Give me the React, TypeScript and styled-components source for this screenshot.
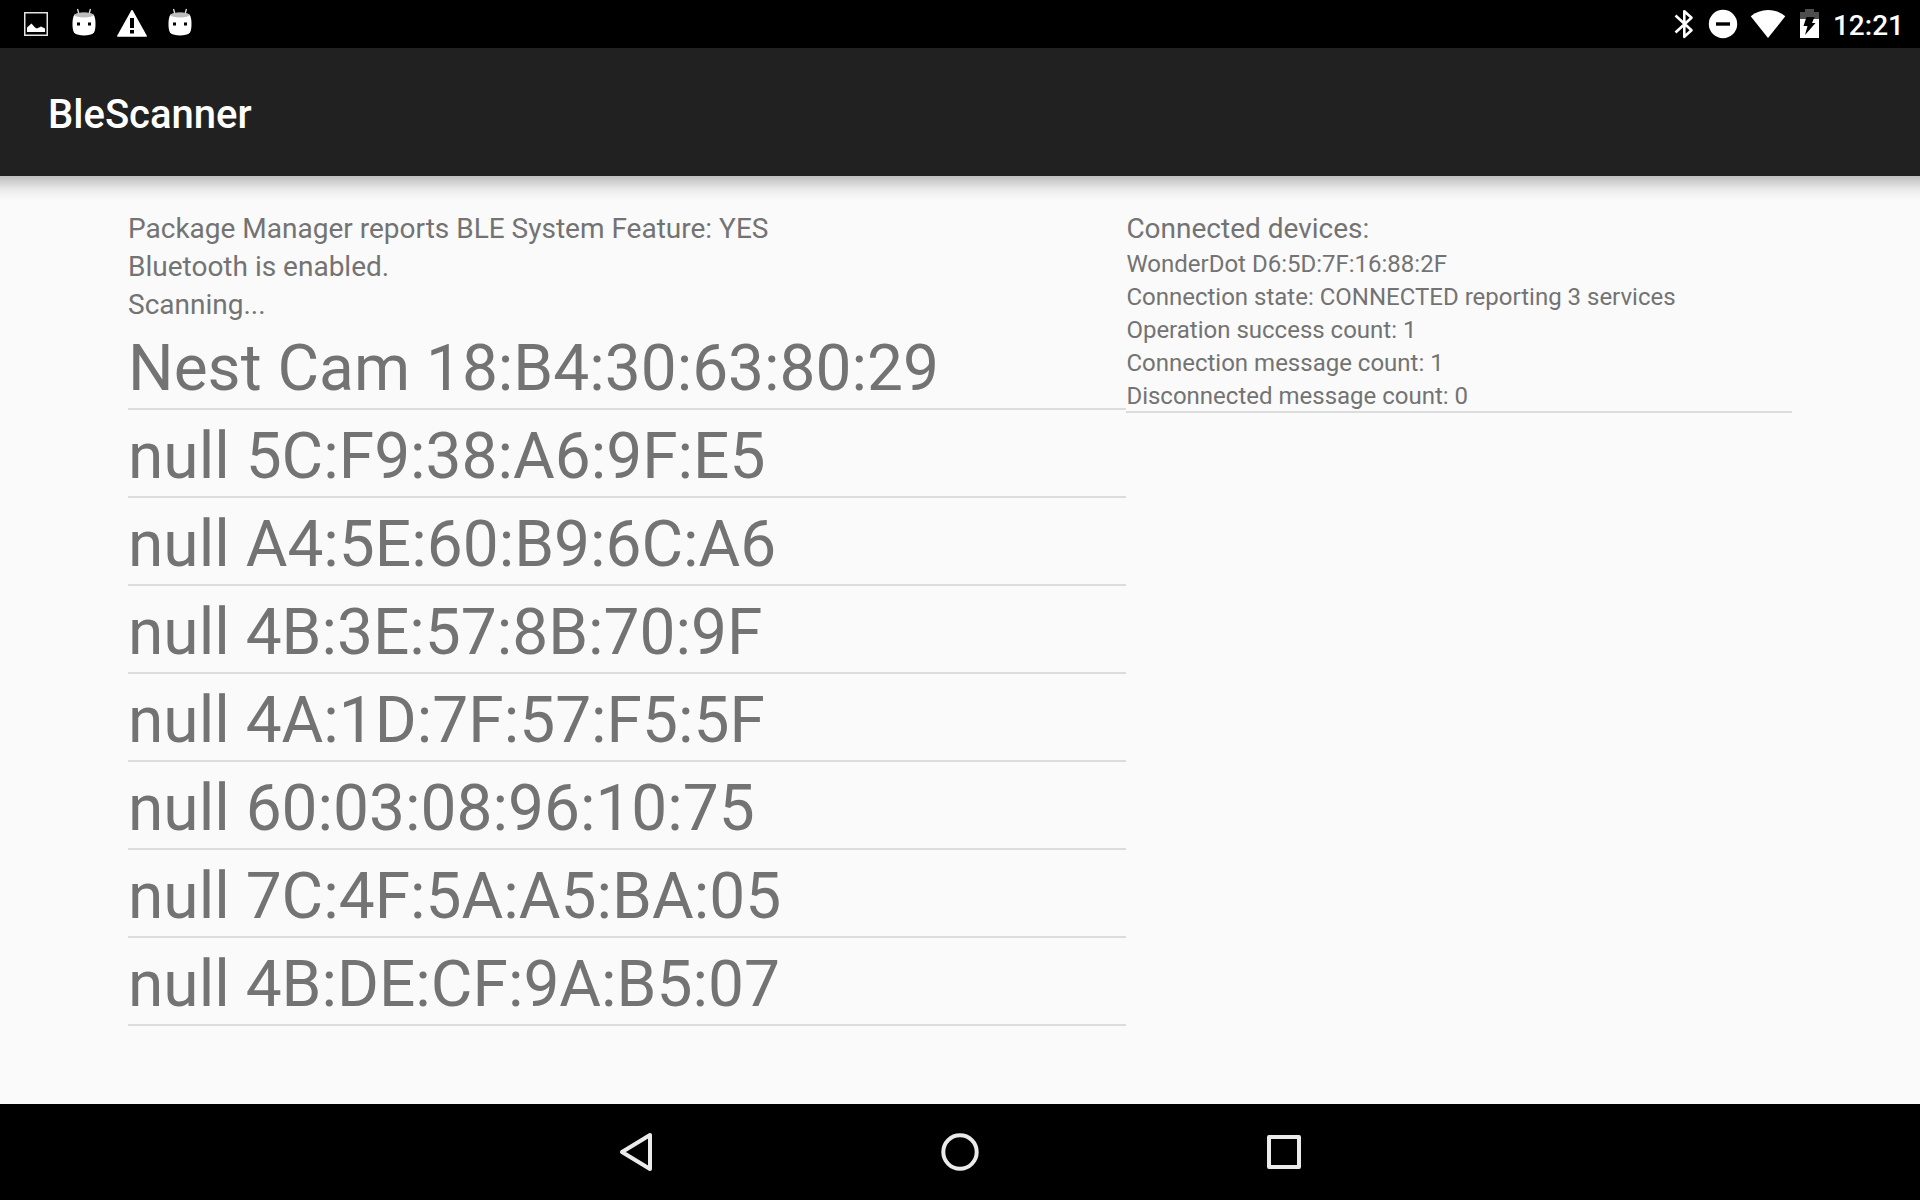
import React from "react";
import styled, { createGlobalStyle } from "styled-components";

const GlobalStyle = createGlobalStyle`
  *, *::before, *::after { box-sizing: border-box; }
  body {
    margin: 0;
    background: #fafafa;
    color: #737373;
    font-family: Roboto, "Noto Sans", sans-serif;
  }
`;

const Screen = styled.div`
  display: flex;
  flex-direction: column;
  min-height: 100vh;
`;

const StatusBar = styled.div`
  display: flex;
  justify-content: space-between;
  height: 48px;
  padding: 0 16px 0 12px;
  background: #000;
  color: #fff;
`;

const Notifications = styled.div`
  display: flex;
  align-items: center;
`;

const SystemStatus = styled.div`
  display: flex;
  align-items: center;
`;

const StatusIcon = styled.svg<{ $width: number }>`
  display: block;
  width: ${(p) => p.$width}px;
  height: 48px;
`;

const Clock = styled.time`
  padding: 4px 0 0 4px;
  font-size: 28px;
  font-weight: 500;
  line-height: 36px;
`;

const AppBar = styled.header`
  position: relative;
  display: flex;
  align-items: center;
  height: 128px;
  padding: 0 48px;
  background: #212121;

  &::after {
    content: "";
    position: absolute;
    top: 100%;
    left: 0;
    right: 0;
    height: 24px;
    background: linear-gradient(
      rgba(0, 0, 0, 0.24),
      rgba(0, 0, 0, 0.18) 20%,
      rgba(0, 0, 0, 0.06) 58%,
      rgba(0, 0, 0, 0)
    );
  }
`;

const Title = styled.h1`
  margin: 0;
  padding-top: 5px;
  color: #fff;
  font-size: 40px;
  font-weight: 500;
  line-height: 48px;
`;

const Content = styled.main`
  flex: 1;
  display: grid;
  grid-template-columns: 3fr 2fr;
  align-items: start;
  padding: 32px 128px;
`;

const Column = styled.section`
  min-width: 0;
`;

const Message = styled.p`
  margin: 0;
  padding-top: 4px;
  font-size: 28px;
  line-height: 34px;
`;

const Heading = styled(Message).attrs({ as: "h2" })`
  font-weight: 400;
`;

const List = styled.ul`
  margin: 0;
  padding: 0;
  list-style: none;
`;

const ScanRow = styled.li`
  padding-top: 8px;
  border-bottom: 2px solid #dcdcdc;
  font-size: 64px;
  line-height: 78px;
`;

const DeviceRow = styled.li`
  border-bottom: 2px solid #dcdcdc;
`;

const DeviceLine = styled.p`
  margin: 0;
  padding-top: 4px;
  font-size: 24px;
  line-height: 29px;
`;

const NavBar = styled.nav`
  display: flex;
  justify-content: center;
  height: 96px;
  background: #000;
`;

const NavButton = styled.button`
  display: flex;
  flex: 0 1 324px;
  align-items: center;
  justify-content: center;
  padding: 0;
  border: 0;
  background: none;
  cursor: pointer;
`;

const NavIcon = styled.svg`
  display: block;
  width: 48px;
  height: 48px;
  fill: none;
  stroke: #ebebeb;
  stroke-width: 4;
  stroke-linejoin: round;
`;

const PictureIcon = () => (
  <StatusIcon $width={48} viewBox="0 0 48 48" aria-hidden="true">
    <rect x="12.75" y="12.75" width="22.5" height="22.5" fill="none" stroke="#e4e4e4" strokeWidth="1.5" />
    <path fill="#fff" d="M15 32v-4.500l4.500-4 3.500 4 2 1 4-2 4 2V32z" />
  </StatusIcon>
);

const DroidIcon = () => (
  <StatusIcon $width={48} viewBox="0 0 48 48" aria-hidden="true">
    <path d="M17.500 9l1.500 5M30.500 9L29 14" stroke="#e4e4e4" strokeWidth="1.300" fill="none" />
    <path
      fill="#fff"
      d="M14.500 14.500C17 13 21 12.700 24 12.700s7 .3 9.500 1.800c1.600 2.500 2 6 2 9.500 0 3-.3 6.500-1.500 8.500-1.800 2.200-6 3-10 3s-8.200-.8-10-3c-1.200-2-1.500-5.500-1.500-8.500 0-3.500.4-7 2-9.500z"
    />
    <ellipse cx="24" cy="15" rx="9.500" ry="2.400" fill="#bdbdbd" />
    <path fill="#000" d="M17 22.500h3v3h-3zM28 22.500h3v3h-3z" />
  </StatusIcon>
);

const WarningIcon = () => (
  <StatusIcon $width={48} viewBox="0 0 48 48" aria-hidden="true">
    <path fill="#fff" stroke="#fff" strokeWidth="1.500" strokeLinejoin="round" d="M24 10.700L38.200 36H9.800z" />
    <path fill="#000" d="M22 18h4v10h-4zM22 30h4v3.500h-4z" />
  </StatusIcon>
);

const BluetoothIcon = () => (
  <StatusIcon $width={34} viewBox="0 0 34 48" aria-hidden="true">
    <path
      fill="none"
      stroke="#fff"
      strokeWidth="2.600"
      strokeLinejoin="round"
      d="M8.500 15.500L24.500 30.200 17.300 36.800V11.200L24.500 17.800 8.500 32.500"
    />
  </StatusIcon>
);

const DoNotDisturbIcon = () => (
  <StatusIcon $width={44} viewBox="0 0 44 48" aria-hidden="true">
    <circle cx="22" cy="24" r="14.200" fill="#fff" />
    <path fill="#000" d="M15 22.300h14v3.400H15z" />
  </StatusIcon>
);

const WifiIcon = () => (
  <StatusIcon $width={46} viewBox="0 0 46 48" aria-hidden="true">
    <path fill="#fff" d="M23 38L5.700 16.200C10.500 12.300 16.500 10 23 10s12.500 2.300 17.300 6.200z" />
  </StatusIcon>
);

const BatteryIcon = () => (
  <StatusIcon $width={38} viewBox="0 0 38 48" aria-hidden="true">
    <path fill="#4d4d4d" d="M9 19v-7h5V9h9v3h5v7z" />
    <path fill="#fff" d="M9 19h19v19H9z" />
    <path fill="#000" d="M15.500 17h8l-2.500 6h3.500L14 35l2.500-9h-4z" />
  </StatusIcon>
);

const messages = [
  "Package Manager reports BLE System Feature: YES",
  "Bluetooth is enabled.",
  "Scanning...",
];

const scanResults = [
  "Nest Cam 18:B4:30:63:80:29",
  "null 5C:F9:38:A6:9F:E5",
  "null A4:5E:60:B9:6C:A6",
  "null 4B:3E:57:8B:70:9F",
  "null 4A:1D:7F:57:F5:5F",
  "null 60:03:08:96:10:75",
  "null 7C:4F:5A:A5:BA:05",
  "null 4B:DE:CF:9A:B5:07",
];

const connectedDevices = [
  {
    name: "WonderDot D6:5D:7F:16:88:2F",
    details: [
      "Connection state: CONNECTED reporting 3 services",
      "Operation success count: 1",
      "Connection message count: 1",
      "Disconnected message count: 0",
    ],
  },
];

export default function App() {
  return (
    <>
      <GlobalStyle />
      <Screen>
        <StatusBar>
          <Notifications>
            <PictureIcon />
            <DroidIcon />
            <WarningIcon />
            <DroidIcon />
          </Notifications>
          <SystemStatus>
            <BluetoothIcon />
            <DoNotDisturbIcon />
            <WifiIcon />
            <BatteryIcon />
            <Clock>12:21</Clock>
          </SystemStatus>
        </StatusBar>
        <AppBar>
          <Title>BleScanner</Title>
        </AppBar>
        <Content>
          <Column>
            {messages.map((message) => (
              <Message key={message}>{message}</Message>
            ))}
            <List>
              {scanResults.map((result) => (
                <ScanRow key={result}>{result}</ScanRow>
              ))}
            </List>
          </Column>
          <Column>
            <Heading>Connected devices:</Heading>
            <List>
              {connectedDevices.map((device) => (
                <DeviceRow key={device.name}>
                  <DeviceLine>{device.name}</DeviceLine>
                  {device.details.map((line) => (
                    <DeviceLine key={line}>{line}</DeviceLine>
                  ))}
                </DeviceRow>
              ))}
            </List>
          </Column>
        </Content>
        <NavBar>
          <NavButton type="button" aria-label="Back">
            <NavIcon viewBox="0 0 48 48">
              <path d="M38 7v34L10 24z" />
            </NavIcon>
          </NavButton>
          <NavButton type="button" aria-label="Home">
            <NavIcon viewBox="0 0 48 48">
              <circle cx="24" cy="24" r="16.700" />
            </NavIcon>
          </NavButton>
          <NavButton type="button" aria-label="Overview">
            <NavIcon viewBox="0 0 48 48">
              <rect x="9" y="9" width="30" height="30" />
            </NavIcon>
          </NavButton>
        </NavBar>
      </Screen>
    </>
  );
}
